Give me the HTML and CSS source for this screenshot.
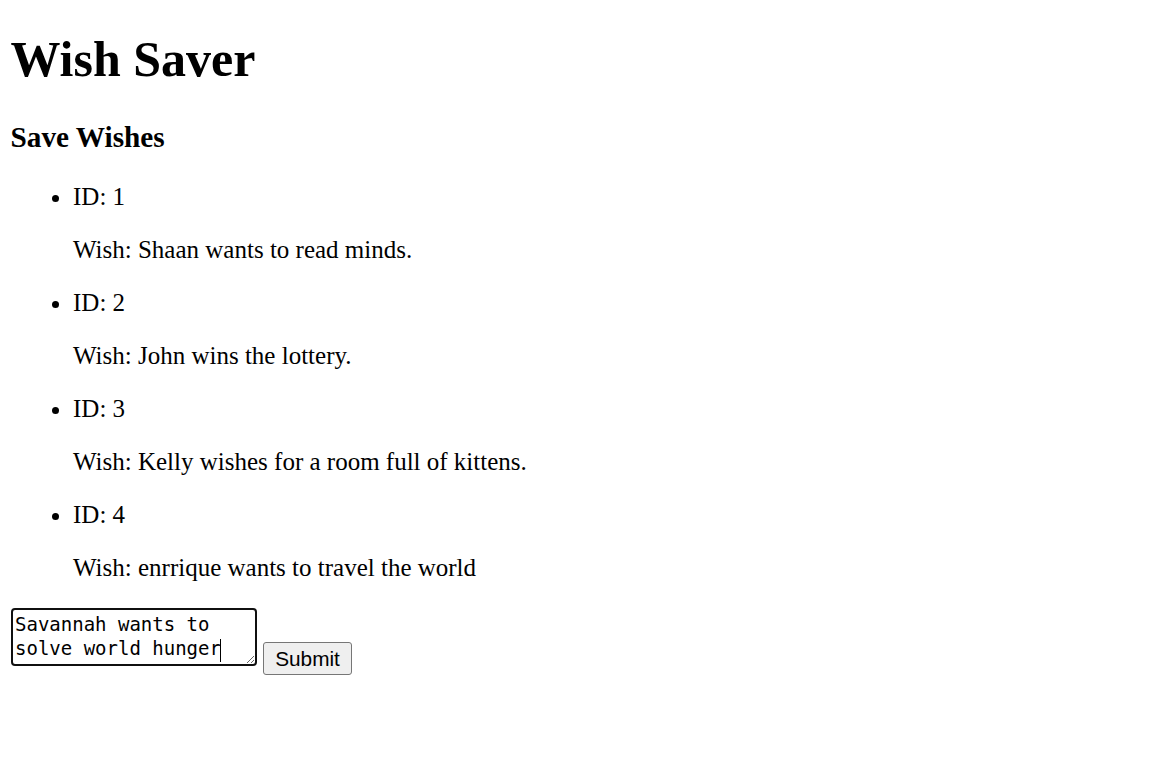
FILE: index.html
```html
<!DOCTYPE html>
<html>
<head>
<meta charset="utf-8">
<title>Wish Saver</title>
<link rel="stylesheet" href="styles.css">
</head>
<body class="body">
<div class="page">
<h1 class="title">Wish Saver</h1>
<h3 class="subtitle">Save Wishes</h3>
<ul class="wish-list">
  <li class="wish-item">ID: 1<p class="wish-text">Wish: Shaan wants to read minds.</p></li>
  <li class="wish-item">ID: 2<p class="wish-text">Wish: John wins the lottery.</p></li>
  <li class="wish-item">ID: 3<p class="wish-text">Wish: Kelly wishes for a room full of kittens.</p></li>
  <li class="wish-item">ID: 4<p class="wish-text">Wish: enrrique wants to travel the world</p></li>
</ul>
<form class="wish-form">
  <span class="input-wrap"><textarea class="wish-input" rows="2" cols="20">Savannah wants to solve world hunger</textarea><span class="caret"></span></span>
  <button class="submit-btn" type="button">Submit</button>
</form>
</div>
</body>
</html>
```

FILE: styles.css
```css
html, body {
  background: #ffffff;
}
.body {
  margin: 0;
  padding: 0 10.5px;
}
.page {
  display: flow-root;
  font-family: "Liberation Serif", "Times New Roman", serif;
  font-size: 25px;
  color: #000000;
}
.title {
  font-size: 50px;
  font-weight: bold;
  margin: 29.5px 0 33.5px;
}
.subtitle {
  font-size: 29.25px;
  font-weight: bold;
  margin: 29.25px 0;
}
.wish-list {
  margin: 25px 0;
  padding-left: 62.5px;
  list-style: disc;
}
.wish-text {
  margin: 25px 0;
}
.wish-form {
  margin: 0;
  padding-top: 1px;
}
.input-wrap {
  position: relative;
  display: inline-block;
}
.wish-input {
  box-sizing: border-box;
  width: 246px;
  height: 57.5px;
  margin: 0;
  padding: 3px 2px 0 2.5px;
  border: 2px solid #101010;
  border-radius: 4px;
  font-family: "DejaVu Sans Mono", "Liberation Mono", monospace;
  font-size: 19px;
  line-height: 23.5px;
  color: #000000;
  background: #ffffff;
  vertical-align: baseline;
  overflow: hidden;
  outline: none;
}
.caret {
  position: absolute;
  left: 209.5px;
  top: 30.5px;
  width: 1px;
  height: 23px;
  background: #000000;
}
.submit-btn {
  box-sizing: border-box;
  width: 89.5px;
  height: 33px;
  margin: 0;
  padding: 0 9px;
  border: 1px solid #767676;
  border-radius: 3px;
  background: #efefef;
  font-family: "Liberation Sans", Arial, sans-serif;
  font-size: 20.8px;
  color: #000000;
  vertical-align: baseline;
}
```
